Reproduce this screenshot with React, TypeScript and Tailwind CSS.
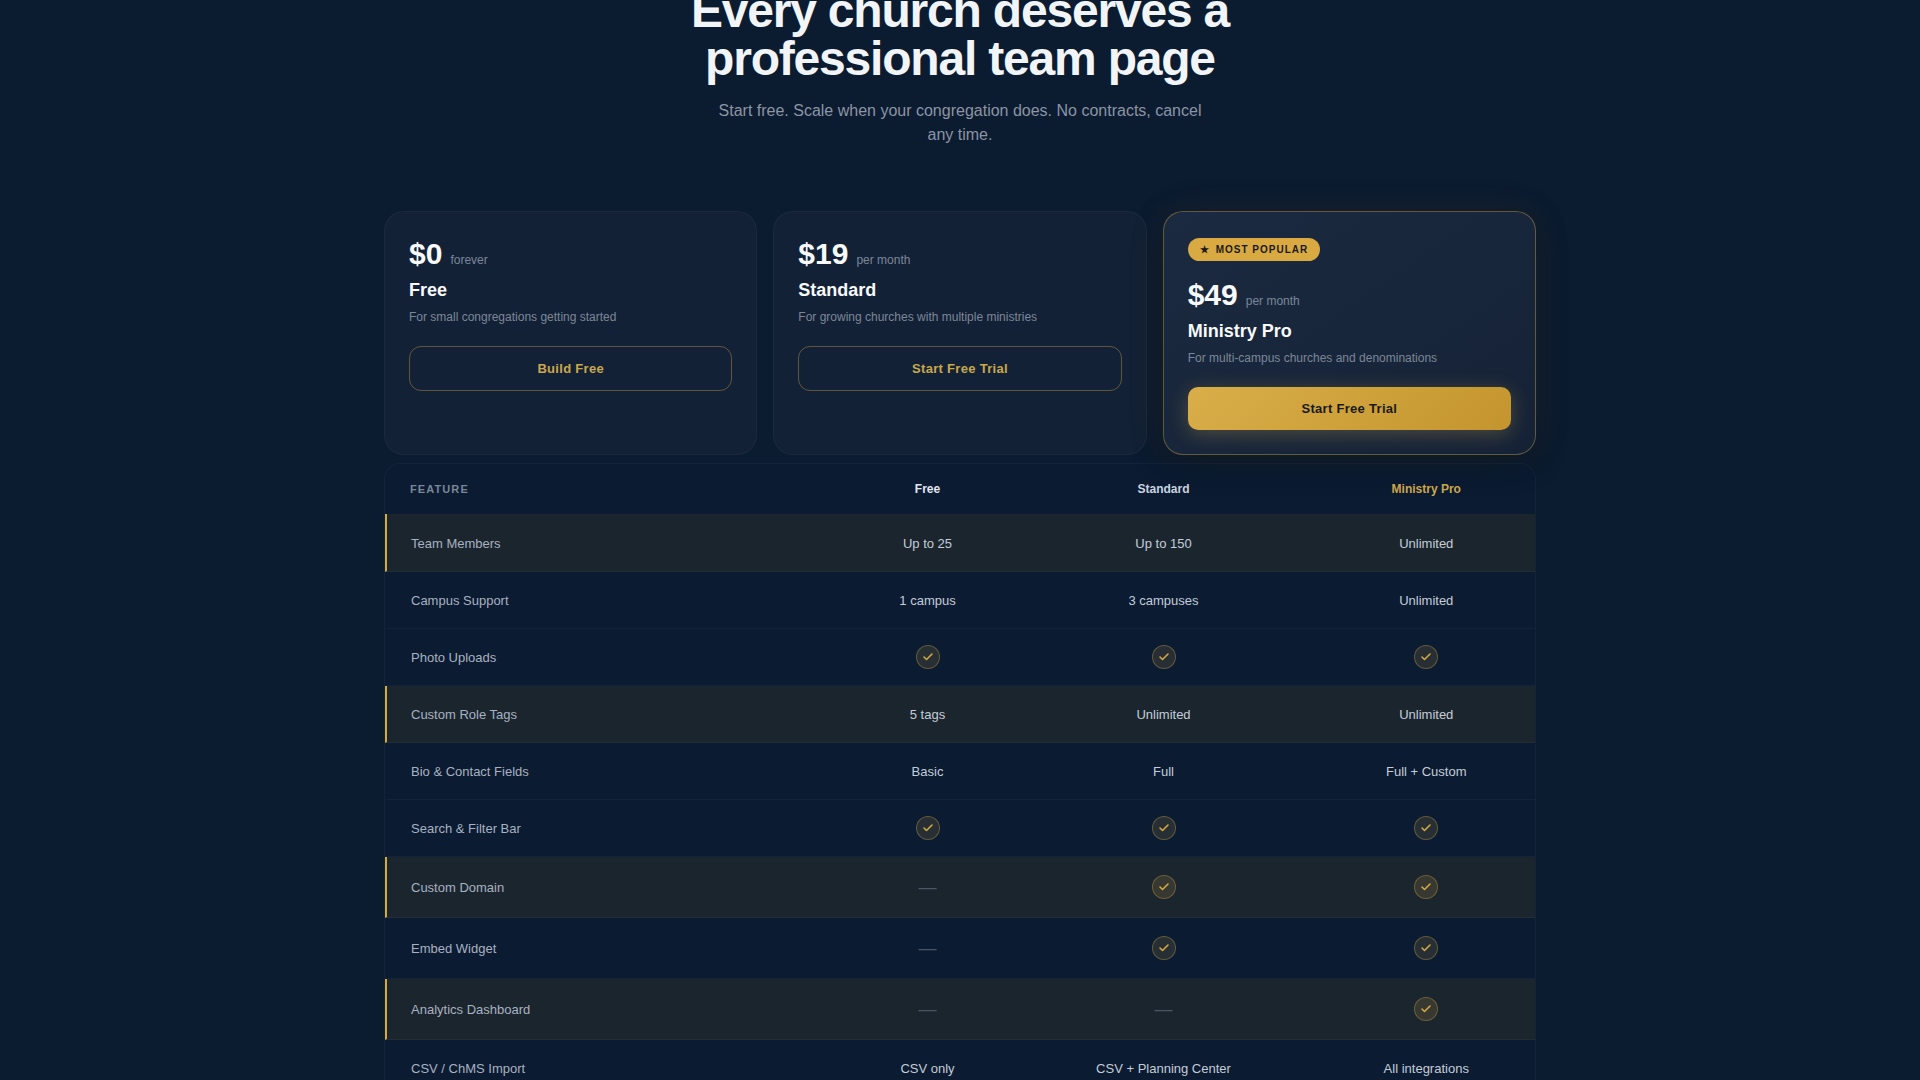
import { Check } from "lucide-react";

type Plan = {
  price: string;
  period: string;
  name: string;
  blurb: string;
  cta: string;
  popular?: boolean;
};

const PLANS: Plan[] = [
  { price: "$0", period: "forever", name: "Free", blurb: "For small congregations getting started", cta: "Build Free" },
  { price: "$19", period: "per month", name: "Standard", blurb: "For growing churches with multiple ministries", cta: "Start Free Trial" },
  { price: "$49", period: "per month", name: "Ministry Pro", blurb: "For multi-campus churches and denominations", cta: "Start Free Trial", popular: true },
];

// "yes" draws the check badge, "no" the dim dash
const ROWS: { name: string; free: string; standard: string; pro: string; highlight?: boolean }[] = [
  { name: "Team Members", free: "Up to 25", standard: "Up to 150", pro: "Unlimited", highlight: true },
  { name: "Campus Support", free: "1 campus", standard: "3 campuses", pro: "Unlimited" },
  { name: "Photo Uploads", free: "yes", standard: "yes", pro: "yes" },
  { name: "Custom Role Tags", free: "5 tags", standard: "Unlimited", pro: "Unlimited", highlight: true },
  { name: "Bio & Contact Fields", free: "Basic", standard: "Full", pro: "Full + Custom" },
  { name: "Search & Filter Bar", free: "yes", standard: "yes", pro: "yes" },
  { name: "Custom Domain", free: "no", standard: "yes", pro: "yes", highlight: true },
  { name: "Embed Widget", free: "no", standard: "yes", pro: "yes" },
  { name: "Analytics Dashboard", free: "no", standard: "no", pro: "yes", highlight: true },
  { name: "CSV / ChMS Import", free: "CSV only", standard: "CSV + Planning Center", pro: "All integrations" },
];

function ValueCell({ value }: { value: string }) {
  if (value === "yes") {
    return (
      <td className="border-b border-b-white/[0.04] text-center">
        <span className="inline-flex h-6 w-6 items-center justify-center rounded-full border border-[#d4a843]/35 bg-[#d4a843]/15 align-middle text-[#d4a843]">
          <Check size={12} strokeWidth={3.2} />
        </span>
      </td>
    );
  }
  if (value === "no") {
    return (
      <td className="border-b border-b-white/[0.04] text-center">
        <span className="align-middle text-lg leading-7 text-[#4b5563]">—</span>
      </td>
    );
  }
  return <td className="border-b border-b-white/[0.04] pt-[2px] text-center">{value}</td>;
}

function PlanCard({ plan }: { plan: Plan }) {
  return (
    <div
      className={
        plan.popular
          ? "relative z-10 rounded-[20px] border border-[#d4a843]/40 bg-[linear-gradient(145deg,#1b2a40,#152236)] px-6 pt-6 pb-6 shadow-[0_0_40px_rgba(212,168,67,0.08),0_8px_32px_rgba(0,0,0,0.3)]"
          : "rounded-[20px] border border-white/[0.04] bg-[#132136] px-6 pt-6 pb-6"
      }
    >
      {plan.popular && (
        <div className="mb-4 inline-flex h-[23px] items-center gap-[6px] rounded-full bg-[#d9aa42] px-3 text-[10px] font-bold tracking-[0.1em] text-[#1a1a1a]">
          <span>★</span>
          <span>MOST POPULAR</span>
        </div>
      )}
      <div className="flex items-baseline gap-2 leading-[35px]">
        <span className="text-[30px] font-bold text-[#f8fafc]">{plan.price}</span>
        <span className="text-xs text-[#7b8798]">{plan.period}</span>
      </div>
      <div className="mt-[6px] text-lg leading-[27px] font-bold text-[#f8fafc]">{plan.name}</div>
      <p className="mt-1 text-xs leading-[19px] text-[#7b8798]">{plan.blurb}</p>
      {plan.popular ? (
        <button className="mt-[19px] h-[43px] w-full rounded-[10px] bg-[linear-gradient(135deg,#d9ae48,#c4952f)] text-[13px] font-bold tracking-[0.3px] text-[#1a1a1a] shadow-[0_4px_20px_rgba(212,168,67,0.3)]">
          {plan.cta}
        </button>
      ) : (
        <button className="mt-[19px] h-[45px] w-full rounded-[12px] border border-[#d4a843]/40 text-[13px] font-bold tracking-[0.3px] text-[#c9a84c]">
          {plan.cta}
        </button>
      )}
    </div>
  );
}

export default function App() {
  return (
    <div className="h-screen overflow-hidden bg-[#0b1b30] font-['Liberation_Sans',Arial,sans-serif]">
      <section className="mx-auto -mt-[13px] max-w-6xl">
        <div className="text-center">
          <h1 className="text-[48px] leading-[48px] font-bold tracking-[-1.2px] text-[#f1f5f9]">
            Every church deserves a
            <br />
            professional team page
          </h1>
          <p className="mx-auto mt-4 max-w-[500px] text-base leading-6 text-[#8b95a5]">
            Start free. Scale when your congregation does. No contracts, cancel any time.
          </p>
        </div>

        <div className="mt-16 grid grid-cols-3 gap-4">
          {PLANS.map((plan) => (
            <PlanCard key={plan.name} plan={plan} />
          ))}
        </div>

        <div className="mt-2 rounded-t-2xl border border-white/[0.04] bg-[#0a1b32]">
          <table className="w-full table-fixed border-separate border-spacing-0">
            <colgroup>
              <col className="w-[460.5px]" />
              <col className="w-[164px]" />
              <col className="w-[308px]" />
              <col className="w-[217.5px]" />
            </colgroup>
            <thead>
              <tr className="h-[50px] text-xs font-bold">
                <th className="pl-[25px] text-left text-[11px] tracking-[0.1em] text-[#7a8798]">FEATURE</th>
                <th className="text-[#e2e8f0]">Free</th>
                <th className="text-[#cbd5e1]">Standard</th>
                <th className="text-[#d1a94d]">Ministry Pro</th>
              </tr>
            </thead>
            <tbody className="text-[13px] text-[#c5cdd8]">
              {ROWS.map((row, i) => {
                const tall = row.free === "no" || row.standard === "no";
                return (
                  <tr key={row.name} className={row.highlight ? "bg-[#1b252e]" : ""}>
                    <td
                      className={`border-b border-l-2 border-b-white/[0.04] pt-[2px] pl-6 text-[#a8b2c0] ${
                        row.highlight ? "border-l-[#d4a843]" : "border-l-transparent"
                      } ${tall ? "h-[61px]" : i === 0 ? "h-[58px]" : "h-[57px]"}`}
                    >
                      {row.name}
                    </td>
                    <ValueCell value={row.free} />
                    <ValueCell value={row.standard} />
                    <ValueCell value={row.pro} />
                  </tr>
                );
              })}
            </tbody>
          </table>
        </div>
      </section>
    </div>
  );
}
